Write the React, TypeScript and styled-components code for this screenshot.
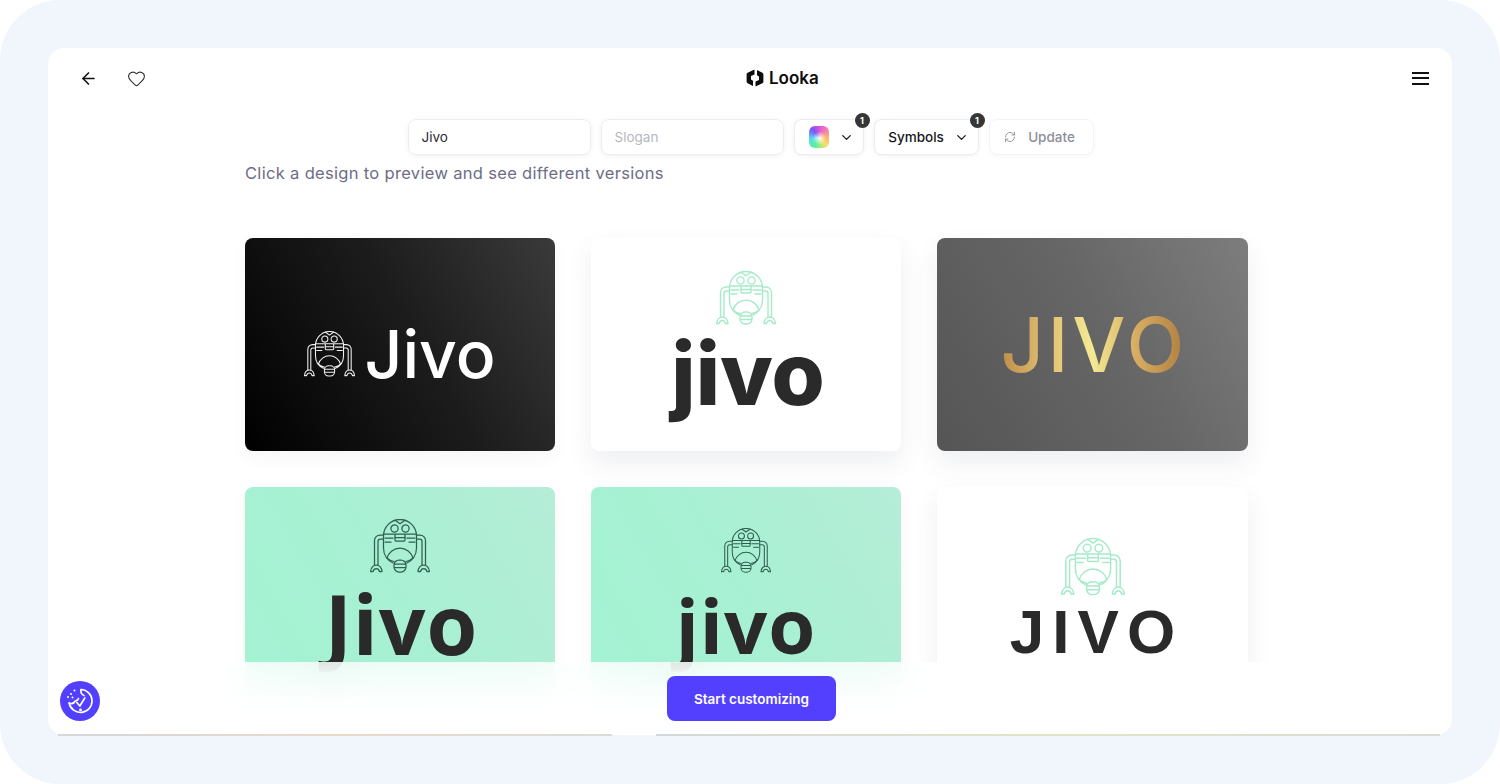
import React from "react";
import styled, { createGlobalStyle } from "styled-components";
import { ArrowLeft, ChevronDown, Heart, RefreshCw } from "lucide-react";

const GlobalStyle = createGlobalStyle`
  html, body {
    margin: 0;
    padding: 0;
    background: #fff;
    overflow: hidden;
  }
  * {
    box-sizing: border-box;
  }
`;

const Panel = styled.div`
  width: 1500px;
  height: 784px;
  padding: 48px;
  background: #f1f6fd;
  border-radius: 60px;
  font-family: Inter, "Liberation Sans", sans-serif;
`;

const Frame = styled.div`
  position: relative;
  height: 687px;
`;

const Sheet = styled.div`
  position: relative;
  display: flex;
  flex-direction: column;
  height: 100%;
  background: #fff;
  border-radius: 16px;
  overflow: hidden;
`;

const EdgeLine = styled.div`
  position: absolute;
  left: 10px;
  right: 12px;
  bottom: -1px;
  display: flex;
  gap: 44px;
  height: 2px;
`;

const EdgeSegment = styled.div<{ $grow: number; $tint: string }>`
  flex: ${(p) => p.$grow};
  background: linear-gradient(90deg, #d5d8dc, ${(p) => p.$tint} 50%, #d9dcd6);
`;

const Header = styled.header`
  display: grid;
  grid-template-columns: 667px auto 1fr;
  align-items: center;
  height: 60px;
  padding: 0 23px 0 31px;
`;

const HeaderLeft = styled.div`
  display: flex;
  align-items: center;
  gap: 29px;
  color: #111;
`;

const IconButton = styled.button`
  display: flex;
  padding: 0;
  border: none;
  background: none;
  color: inherit;
`;

const Brand = styled.div`
  display: flex;
  align-items: center;
  gap: 5px;
  font-size: 17px;
  font-weight: 600;
  color: #0d0d0d;
`;

const Burger = styled.button`
  justify-self: end;
  display: flex;
  flex-direction: column;
  gap: 3.5px;
  width: 17px;
  padding: 0;
  border: none;
  background: none;

  span {
    display: block;
    height: 2px;
    background: #111;
  }
`;

const Toolbar = styled.div`
  display: flex;
  justify-content: center;
  gap: 10px;
  margin: 11px 0 0 1px;
  height: 36px;
`;

const Field = styled.div<{ $muted?: boolean }>`
  display: flex;
  align-items: center;
  width: 183px;
  padding: 0 13px;
  border: 1px solid #e9edf3;
  border-radius: 8px;
  box-shadow: 0 1px 4px rgba(60, 80, 120, 0.08);
  font-size: 13.5px;
  color: ${(p) => (p.$muted ? "#b4b7bf" : "#2c2c33")};
`;

const Chip = styled.button<{ $width: number; $disabled?: boolean; $left?: number; $right?: number }>`
  position: relative;
  display: flex;
  align-items: center;
  justify-content: center;
  gap: ${(p) => (p.$disabled ? "12px" : "10px")};
  width: ${(p) => p.$width}px;
  padding: 0 ${(p) => p.$right ?? 0}px 0 ${(p) => p.$left ?? 0}px;
  background: #fff;
  border: 1px solid ${(p) => (p.$disabled ? "#f1f3f6" : "#e9edf3")};
  border-radius: 8px;
  box-shadow: 0 1px 4px rgba(60, 80, 120, ${(p) => (p.$disabled ? 0.04 : 0.08)});
  font-family: inherit;
  font-size: 13.5px;
  font-weight: 500;
  color: ${(p) => (p.$disabled ? "#8c8f98" : "#17171c")};
`;

const Badge = styled.span`
  position: absolute;
  top: -7px;
  right: -7px;
  width: 15px;
  height: 15px;
  border-radius: 50%;
  background: #363636;
  color: #fff;
  font-size: 9px;
  font-weight: 700;
  line-height: 15px;
  text-align: center;
`;

const Swatch = styled.span`
  width: 20px;
  height: 22px;
  border-radius: 6px;
  background:
    radial-gradient(circle at 52% 55%, #ffffffdd 0, #ffffff00 42%),
    conic-gradient(from 320deg, #7d52f6, #f35fd0, #f9a97a, #f5e06a, #5cf29a, #58d8f0, #7d52f6);
`;

const Content = styled.main`
  width: 1003px;
  margin: 7px 0 0 197px;
`;

const Hint = styled.p`
  margin: 0 0 54px;
  font-size: 16.5px;
  line-height: 22px;
  letter-spacing: 0.32px;
  color: #6d6d85;
`;

const Grid = styled.div`
  display: grid;
  grid-template-columns: 310px 310px 311px;
  gap: 36px;
`;

const LogoCard = styled.div<{ $bg: string; $shadow?: boolean; $pad: string }>`
  position: relative;
  display: flex;
  flex-direction: column;
  align-items: center;
  height: 213px;
  padding: ${(p) => p.$pad};
  border-radius: 8px;
  background: ${(p) => p.$bg};
  box-shadow: ${(p) =>
    p.$shadow ? "0 12px 26px rgba(70, 80, 110, 0.09)" : "0 6px 16px rgba(70, 80, 110, 0.05)"};
  overflow: hidden;
`;

const InlineLogo = styled.div`
  display: flex;
  align-items: center;
  gap: 9px;
`;

const Word = styled.span<{
  $font: string;
  $size: number;
  $weight: number;
  $color: string;
  $spacing?: number;
  $line: number;
  $indent?: number;
}>`
  padding-left: ${(p) => p.$indent ?? 0}px;
  font-family: ${(p) => p.$font}, sans-serif;
  font-size: ${(p) => p.$size}px;
  font-weight: ${(p) => p.$weight};
  line-height: ${(p) => p.$line}px;
  letter-spacing: ${(p) => p.$spacing ?? 0}px;
  color: ${(p) => p.$color};
`;

const GoldWord = styled.span`
  padding-left: 4px;
  font-family: Inter, sans-serif;
  font-size: 75px;
  font-weight: 500;
  line-height: 76px;
  letter-spacing: 4px;
  background: linear-gradient(90deg, #b98a48 0%, #dcb76c 22%, #f4ea93 50%, #d8ae63 72%, #ad7c3e 100%);
  -webkit-background-clip: text;
  background-clip: text;
  color: transparent;
`;

const Footer = styled.footer`
  position: absolute;
  left: 0;
  right: 0;
  bottom: 0;
  display: grid;
  grid-template-columns: 40px 1fr 40px;
  align-items: end;
  justify-items: center;
  height: 73px;
  padding: 0 12px 14px;
  background: linear-gradient(rgba(255, 255, 255, 0.8), #fff 85%);
  backdrop-filter: blur(20px);
`;

const HelpButton = styled.button`
  display: flex;
  align-items: center;
  justify-content: center;
  width: 40px;
  height: 40px;
  padding: 0;
  border: none;
  border-radius: 50%;
  background: #5340ff;
`;

const Primary = styled.button`
  width: 169px;
  height: 45px;
  margin-left: 3px;
  border: none;
  border-radius: 8px;
  background: #5340ff;
  color: #fff;
  font-family: inherit;
  font-size: 13.5px;
  font-weight: 600;
`;

const Robot: React.FC<{ color: string; width: number; strokeWidth?: number }> = ({
  color,
  width,
  strokeWidth = 1.25,
}) => (
  <svg
    width={width}
    viewBox="0 0 60 54"
    fill="none"
    stroke={color}
    strokeWidth={strokeWidth}
    strokeLinecap="round"
    strokeLinejoin="round"
  >
    {/* body */}
    <path d="M13.5 17a16.5 16.5 0 0 1 33 0v12a16.5 16.5 0 0 1-9.5 15M13.5 17v12a16.5 16.5 0 0 0 9.5 15" />
    <path d="M25 1.2l5 3.6 5-3.6" />
    <circle cx="24.5" cy="9.5" r="3.6" />
    <circle cx="35.5" cy="9.5" r="3.6" />
    {/* chest */}
    <path d="M13.8 15h11M35 15h10.8M15 19h8M37 19h8M15 23h6M39 23h6" />
    <rect x="25" y="15" width="10" height="7" rx="1" />
    <path d="M25 18.5h10" />
    {/* face */}
    <path d="M17 39a13.5 13.5 0 0 1 26 0" />
    <path d="M17 39c2 2 4 3 7 3.5M43 39c-2 2-4 3-7 3.5" />
    {/* bulb */}
    <rect x="24" y="41" width="12" height="12" rx="5" />
    <path d="M24.5 45h11M24.5 48.5h11" />
    {/* arms */}
    <path d="M13.5 16H10c-3 0-5.5 2.5-5.5 5.5V46M13.5 20H10.5c-1.5 0-2.5 1-2.5 2.5V46" />
    <path d="M46.5 16H50c3 0 5.5 2.5 5.5 5.5V46M46.5 20h3c1.5 0 2.5 1 2.5 2.5V46" />
    {/* feet */}
    <path d="M.6 52.5C1 48.5 3.5 46 6.3 46S11.6 48.5 12 52.5H9.5C9 50.5 8 49.5 6.3 49.5S3.5 50.5 3 52.5z" />
    <path d="M48 52.5c.4-4 2.9-6.5 5.7-6.5s5.3 2.5 5.7 6.5H57c-.5-2-1.5-3-3.3-3S51 50.5 50.5 52.5z" />
  </svg>
);

const LookaMark = () => (
  <svg width="18" height="18" viewBox="0 0 18 18" fill="#0d0d0d">
    <path d="M8.5.5L1.6 3.8C1 4.1.6 4.700.6 5.4v7.200c0 .7.4 1.300 1 1.600L7 17v-5.200l-2-1.300V7l3.500-1.500z" />
    <path d="M9.5 17.500l6.900-3.300c.6-.3 1-.9 1-1.600V5.400c0-.7-.4-1.300-1-1.600L11 1v5.200l2 1.300V11l-3.500 1.500z" />
  </svg>
);

const HelpIcon = () => (
  <svg width="30" height="30" viewBox="0 0 30 30" fill="none" stroke="#fff" strokeWidth="1.7" strokeLinecap="round" strokeLinejoin="round">
    <path d="M16 3.5a11.5 11.5 0 1 1-11.800 13.500" />
    <path d="M16 3.5c-.5 3 .5 5 3 6M4.200 17c2.500 1.200 4.700.5 6-2 1.500-.2 2.800-.8 3.300-2.500" />
    <path d="M11.800 16.500l3 3.500 5-8" />
    <circle cx="15.500" cy="24" r=".6" fill="#fff" />
    <circle cx="9.500" cy="4.500" r="1" fill="#fff" stroke="none" />
    <circle cx="6" cy="8" r="1" fill="#fff" stroke="none" />
    <circle cx="3" cy="11" r="1" fill="#fff" stroke="none" />
    <circle cx="7.500" cy="11.500" r="1" fill="#fff" stroke="none" />
  </svg>
);

const App: React.FC = () => {
  return (
    <>
      <GlobalStyle />
      <Panel>
        <Frame>
          <Sheet>
            <Header>
              <HeaderLeft>
                <IconButton>
                  <ArrowLeft size={19} strokeWidth={2} />
                </IconButton>
                <IconButton>
                  <Heart size={19} strokeWidth={1.4} color="#333" />
                </IconButton>
              </HeaderLeft>
              <Brand>
                <LookaMark />
                Looka
              </Brand>
              <Burger>
                <span />
                <span />
                <span />
              </Burger>
            </Header>

            <Toolbar>
              <Field>Jivo</Field>
              <Field $muted>Slogan</Field>
              <Chip $width={70} $left={5}>
                <Swatch />
                <ChevronDown size={15} strokeWidth={2} />
                <Badge>1</Badge>
              </Chip>
              <Chip $width={105} $left={5}>
                Symbols
                <ChevronDown size={15} strokeWidth={2} />
                <Badge>1</Badge>
              </Chip>
              <Chip $width={105} $disabled $right={3}>
                <RefreshCw size={12} strokeWidth={1.8} />
                Update
              </Chip>
            </Toolbar>

            <Content>
              <Hint>Click a design to preview and see different versions</Hint>
              <Grid>
                <LogoCard $bg="linear-gradient(60deg, #000 0%, #1c1c1c 55%, #3a3a3a 100%)" $pad="79px 0 0">
                  <InlineLogo>
                    <Robot color="#f1f1f1" width={51} />
                    <Word $font="Inter" $size={66} $weight={500} $color="#fff" $line={74}>
                      Jivo
                    </Word>
                  </InlineLogo>
                </LogoCard>

                <LogoCard $bg="#fff" $shadow $pad="33px 0 0">
                  <Robot color="#a5ebc9" width={60} strokeWidth={1.4} />
                  <Word $font="Inter" $size={86} $weight={800} $color="#2a2a2a" $line={98} $indent={4}>
                    jivo
                  </Word>
                </LogoCard>

                <LogoCard $bg="linear-gradient(60deg, #555 0%, #666 55%, #7d7d7d 100%)" $shadow $pad="69px 0 0">
                  <GoldWord>JIVO</GoldWord>
                </LogoCard>

                <LogoCard $bg="linear-gradient(60deg, #a3f3d3 0%, #a8f0d3 50%, #b6edd8 100%)" $pad="32px 0 0">
                  <Robot color="#2f5f50" width={60} />
                  <Word $font="'Open Sans'" $size={82} $weight={700} $color="#2a2a2a" $line={100} $spacing={1} $indent={3}>
                    Jivo
                  </Word>
                </LogoCard>

                <LogoCard $bg="linear-gradient(60deg, #a3f3d3 0%, #a8f0d3 50%, #b6edd8 100%)" $pad="41px 0 0">
                  <Robot color="#2f5f50" width={50} />
                  <Word $font="'Open Sans'" $size={76} $weight={700} $color="#2a2a2a" $line={104} $spacing={1}>
                    jivo
                  </Word>
                </LogoCard>

                <LogoCard $bg="#fff" $shadow $pad="51px 0 0">
                  <Robot color="#a5ebc9" width={64} strokeWidth={1.4} />
                  <Word $font="'Liberation Sans'" $size={62} $weight={700} $color="#2a2a2a" $line={72} $spacing={8} $indent={8}>
                    JIVO
                  </Word>
                </LogoCard>
              </Grid>
            </Content>

            <Footer>
              <HelpButton>
                <HelpIcon />
              </HelpButton>
              <Primary>Start customizing</Primary>
            </Footer>
          </Sheet>
          <EdgeLine>
            <EdgeSegment $grow={554} $tint="#ead9c8" />
            <EdgeSegment $grow={784} $tint="#dfe6c4" />
          </EdgeLine>
        </Frame>
      </Panel>
    </>
  );
};

export default App;
